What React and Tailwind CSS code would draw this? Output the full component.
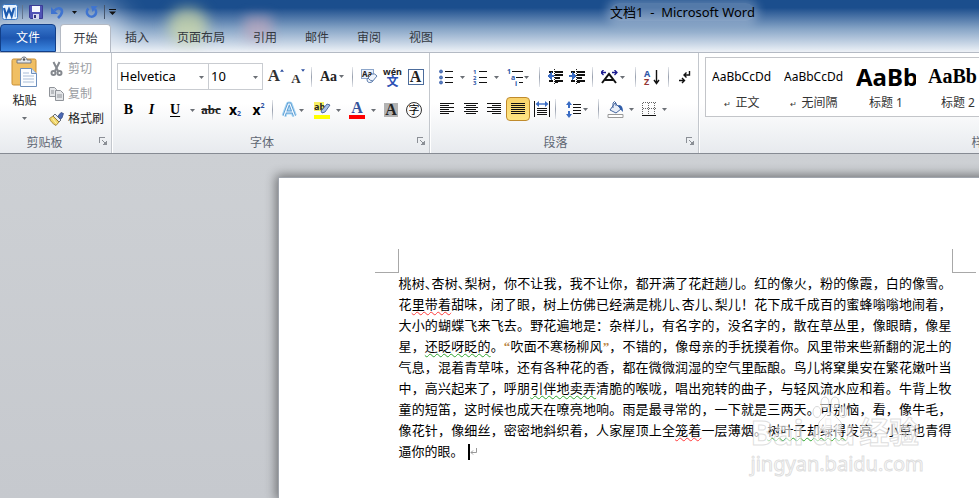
import React from "react";
import clsx from "clsx";

const Arrow = ({ className }) => (
  <svg width="5" height="3" viewBox="0 0 5 3" className={clsx("shrink-0", className)}>
    <path d="M0 0h5L2.5 3z" fill="#6b6f75" />
  </svg>
);

const Sep = ({ className }) => (
  <span className={clsx("h-5 w-px shrink-0 bg-gradient-to-b from-gray-200 via-gray-400 to-gray-200", className)} />
);

const Tool = ({ label, className, split, children }) => (
  <button
    type="button"
    aria-label={label}
    className={clsx("flex h-6 shrink-0 items-center", split ? "justify-between pr-1 pl-1" : "justify-center", className)}
  >
    {children}
    {split && <Arrow />}
  </button>
);

// letters used as toolbar glyphs
const Letter = ({ className, children }) => (
  <span className={clsx("font-['Liberation_Serif',serif] font-bold", className)}>{children}</span>
);

const Lines = ({ rows }) => (
  <svg width="16" height="14" viewBox="0 0 16 14" stroke="#111" strokeWidth="1" shapeRendering="crispEdges">
    {rows.map(([a, b], i) => (
      <path key={i} d={`M${a} ${i * 2 + 1.5}H${b}`} />
    ))}
  </svg>
);

const Group = ({ title, className, children }) => (
  <section className={clsx("flex flex-col border-r border-[#c3c7cd] shadow-[1px_0_0_#fff]", className)}>
    <div className="h-20">{children}</div>
    <div className="relative flex h-5 items-center justify-center pr-[22px] text-[#5f6773]">
      {title}
      <button type="button" aria-label={`${title} 设置`} className="absolute right-1 top-1">
        <svg width="8" height="8" viewBox="0 0 8 8" fill="none" stroke="#8b8f96" shapeRendering="crispEdges">
          <path d="M.5 6V.5H6" />
          <path d="M3 3l3 3M7.5 4v3.5H4" />
          <path d="M5 5h2v2H5z" fill="#8b8f96" stroke="none" />
        </svg>
      </button>
    </div>
  </section>
);

const QuickAccess = () => (
  <div className="flex h-6 items-center pl-0.5">
    <svg width="16" height="16" viewBox="0 0 16 16">
      <rect x=".5" y=".5" width="15" height="15" rx="2" fill="#eaf3fd" stroke="#3b78c4" />
      <path d="M12.500 3h1.500v10h-1.500z" fill="#8db8ea" />
      <path d="M2 4l2.300 8L7 5.200 9.700 12 12 4" fill="none" stroke="#1c5bb0" strokeWidth="2.200" />
    </svg>
    <span className="ml-1 h-3.5 w-px bg-slate-500" />
    <button type="button" aria-label="保存" className="ml-1.5">
      <svg width="14" height="14" viewBox="0 0 14 14">
        <path d="M.5.5h13v13h-12l-1-1z" fill="#5053b5" stroke="#3a3c94" />
        <path d="M3 1h8v6H3z" fill="#f4f7fd" />
        <path d="M4 9h6v5H4z" fill="#d5d9ee" />
        <path d="M5 10h2v3H5z" fill="#34367f" />
      </svg>
    </button>
    <button type="button" aria-label="撤消" className="ml-2 flex items-center gap-2">
      <svg width="13" height="13" viewBox="0 0 13 13" fill="none">
        <path d="M3.500 4.500c3-3.500 7.500-2.500 7.500 1 0 3-2 4.500-4 6.500" stroke="#3f74d0" strokeWidth="2.600" />
        <path d="M0 1v7h7z" fill="#3f74d0" />
      </svg>
      <svg width="5" height="3" viewBox="0 0 5 3"><path d="M0 0h5L2.5 3z" fill="#111" /></svg>
    </button>
    <button type="button" aria-label="重复" className="ml-2">
      <svg width="13" height="13" viewBox="0 0 13 13" fill="none">
        <path d="M3.500 2.500a4.600 4.600 0 1 0 6.500.5" stroke="#3f74d0" strokeWidth="2.600" />
        <path d="M6 0h6.500L7.500 6z" fill="#3f74d0" />
      </svg>
    </button>
    <span className="ml-1.5 h-3.5 w-px bg-slate-600" />
    <button type="button" aria-label="自定义快速访问工具栏" className="ml-1">
      <svg width="7" height="6" viewBox="0 0 7 6" fill="#111"><path d="M0 0h7v1H0zM0 2.500h7L3.500 6z" /></svg>
    </button>
  </div>
);

const tabs = ["插入", "页面布局", "引用", "邮件", "审阅", "视图"];

const TitleBar = () => (
  <header className="relative overflow-hidden bg-gradient-to-b from-[#1b4e8d] from-15% via-[#86a4c6] via-55% to-[#eef2f7]">
    <div className="absolute -left-4 top-1 h-14 w-36 rounded-full bg-white/50 blur-md" />
    <div className="absolute left-[168px] top-2 h-9 w-10 rounded-full bg-[#d5e0a8]/70 blur-[7px]" />
    <div className="absolute left-[244px] top-4 h-6 w-7 rounded bg-[#c8a9bd]/60 blur-[6px]" />
    <div className="relative">
      <h1 className="absolute inset-x-0 top-0 text-center text-[13px] leading-6 text-black">
        <span className="rounded-full bg-white/25 shadow-[0_0_8px_4px_rgba(255,255,255,0.25)]">文档1&nbsp; -&nbsp; Microsoft Word</span>
      </h1>
      <div className="relative"><QuickAccess /></div>
      <nav className="flex h-7 items-stretch text-[#33383f]">
        <button type="button" className="mr-1 w-14 rounded-t-sm border border-[#123f88] bg-gradient-to-b from-[#3a78cc] via-[#1d56b0] to-[#3b86e0] text-white">
          文件
        </button>
        <button type="button" className="w-[51px] rounded-t border border-b-0 border-[#b4bac4] bg-white">开始</button>
        {tabs.map((tab) => (
          <button key={tab} type="button" className="px-3.5">{tab}</button>
        ))}
      </nav>
    </div>
  </header>
);

const Clipboard = () => (
  <Group title="剪贴板" className="w-28">
    <div className="flex pt-[3px]">
      <button type="button" className="flex w-[49px] flex-col items-center">
        <svg width="27" height="31" viewBox="0 0 27 31">
          <rect x="1" y="3" width="24" height="26" rx="1.500" fill="#f0bf64" stroke="#c98f35" />
          <path d="M6 7V4h4c0-4 6-4 6 0h4v3z" fill="#e3e6ea" stroke="#72777e" />
          <circle cx="13" cy="3.500" r="1.200" fill="#555" />
          <path d="M9.500 12.500h11l5 5v13h-16z" fill="#fbfdff" stroke="#6d8fbd" />
          <path d="M20.500 12.500v5h5" fill="#dce8f6" stroke="#6d8fbd" />
          <path d="M12 17h6M12 20h11M12 23h11M12 26h11" stroke="#a9bdd8" />
        </svg>
        <span className="mt-1 leading-5">粘贴</span>
        <Arrow className="mt-1.5" />
      </button>
      <div className="flex flex-col">
        <button type="button" className="flex h-[25px] items-center gap-1 text-[#9a9da2]">
          <svg width="15" height="16" viewBox="0 0 15 16" fill="none" stroke="#85898f" strokeWidth="2">
            <path d="M4.500 1l4.500 9M10.500 1L6 10" />
            <circle cx="4.500" cy="12" r="2" />
            <circle cx="10.500" cy="12" r="2" />
          </svg>
          剪切
        </button>
        <button type="button" className="flex h-[25px] items-center gap-1 text-[#9a9da2]">
          <svg width="15" height="14" viewBox="0 0 15 14" fill="#e4e6e9" stroke="#8f9399">
            <path d="M.5.5h5l2 2v7h-7z" />
            <path d="M6.500 3.500h5l3 3v7h-8z" />
            <path d="M2 4h3M2 6h3M8 8h5M8 10h5" />
          </svg>
          复制
        </button>
        <button type="button" className="flex h-[25px] items-center gap-1">
          <svg width="15" height="14" viewBox="0 0 15 14">
            <path d="M9 4l3-3.500 2.500 1L13 6l-3 2z" fill="#4a68b4" stroke="#2d417c" strokeWidth=".7" />
            <path d="M6 2l6 6-2 2-6-6z" fill="#e9edf3" stroke="#444c5c" strokeWidth=".8" />
            <path d="M4 4l6 6-3 3.500C4 12 1.500 9.500.5 6.500z" fill="#f0d568" stroke="#92742c" strokeWidth=".8" />
            <path d="M3.500 6.500l4 5" stroke="#fff6c0" />
          </svg>
          格式刷
        </button>
      </div>
    </div>
  </Group>
);

const Combo = ({ label, value, className }) => (
  <label className={clsx("relative block h-[27px] border border-[#c9ccd1] bg-white", className)}>
    <select aria-label={label} defaultValue={value} className="h-full w-full appearance-none px-0.5 text-[13px] text-black">
      <option>{value}</option>
    </select>
    <Arrow className="absolute right-1 top-3" />
  </label>
);

const FontGroup = () => (
  <Group title="字体" className="w-[318px] pl-[5px]">
    <div className="flex items-center pt-2.5">
      <Combo label="字体" value="Helvetica" className="w-[92px]" />
      <Combo label="字号" value="10" className="-ml-px w-[55px]" />
      <Tool label="增大字体" className="ml-0.5 w-[22px]">
        <Letter className="text-[17px] text-[#333]">A</Letter>
        <svg width="4" height="3" className="mb-3" viewBox="0 0 5 3"><path d="M0 3h5L2.500 0z" fill="#2d4fa0" /></svg>
      </Tool>
      <Tool label="缩小字体" className="w-[22px]">
        <Letter className="mt-1 text-[13px] text-[#333]">A</Letter>
        <svg width="4" height="3" className="mb-3" viewBox="0 0 5 3"><path d="M0 0h5L2.500 3z" fill="#2d4fa0" /></svg>
      </Tool>
      <Sep className="ml-0.5" />
      <Tool label="更改大小写" split className="ml-1 w-8">
        <Letter className="text-sm text-[#222]">Aa</Letter>
      </Tool>
      <Sep className="ml-1" />
      <Tool label="清除格式" className="ml-1 w-6">
        <svg width="17" height="16" viewBox="0 0 17 16">
          <rect x=".5" y=".5" width="12" height="9" fill="#e9f1fc" stroke="#8da6ca" />
          <text x="1" y="8" fontSize="8" fontWeight="700" fill="#222">Aa</text>
          <path d="M6 10l5-5q3-1 5 2l-5 6q-5 2-5-3z" fill="#eef3fb" stroke="#5f7fae" />
          <path d="M7 9q2 3 5 3" fill="none" stroke="#5f7fae" />
        </svg>
      </Tool>
      <Tool label="拼音指南" className="w-[23px] flex-col">
        <span className="text-[9px] leading-[9px] font-bold text-[#222]">wén</span>
        <span className="text-xs leading-[11px] font-bold text-[#2b50b4]">文</span>
      </Tool>
      <Tool label="字符边框" className="w-[23px]">
        <Letter className="h-4 w-4 border border-[#4c6c9c] bg-white text-center text-base leading-3.5 text-[#222]">A</Letter>
      </Tool>
    </div>
    <div className="flex items-center pt-2">
      <Tool label="加粗" className="w-[23px]"><Letter className="text-sm text-black">B</Letter></Tool>
      <Tool label="倾斜" className="w-[23px]"><Letter className="text-sm text-black italic">I</Letter></Tool>
      <Tool label="下划线" split className="w-9 pl-[7px]">
        <Letter className="text-sm text-black underline underline-offset-2">U</Letter>
      </Tool>
      <Tool label="删除线" className="w-6"><Letter className="text-[13px] text-[#222] line-through">abc</Letter></Tool>
      <Tool label="下标" className="w-6 text-black">
        <span className="text-sm leading-4 font-bold">x</span><span className="mt-2 text-[7px] leading-2 font-bold text-[#2d4fa0]">2</span>
      </Tool>
      <Tool label="上标" className="w-[23px] text-black">
        <span className="text-sm leading-4 font-bold">x</span><span className="mb-2 text-[7px] leading-2 font-bold text-[#2d4fa0]">2</span>
      </Tool>
      <Sep className="ml-0.5" />
      <Tool label="文本效果" split className="ml-1 w-[31px]">
        <svg width="17" height="18" viewBox="0 0 17 18" className="shrink-0">
          <path d="M3 15L7.500 3h1.500L13.500 15M5 11h7" fill="none" stroke="#a9d8f5" strokeWidth="5" strokeLinejoin="round" />
          <path d="M3 15L7.500 3h1.500L13.500 15M5 11h7" fill="none" stroke="#5b9ad2" strokeWidth="3" />
          <path d="M3 15L7.500 3h1.500L13.500 15M5 11h7" fill="none" stroke="#f5fbff" strokeWidth="1.200" />
        </svg>
      </Tool>
      <Tool label="突出显示" split className="ml-0.5 w-[35px]">
        <svg width="17" height="18" viewBox="0 0 17 18">
          <path d="M0 1h10v9H0z" fill="#f7ef62" />
          <text x="0" y="9" fontSize="9" fontWeight="700" fill="#222">ab</text>
          <path d="M7 10l6-7 3 1-5 7-3 1z" fill="#a9c2e8" stroke="#334f8b" strokeWidth=".8" />
          <path d="M0 14h16v4H0z" fill="#ffff00" />
        </svg>
      </Tool>
      <Tool label="字体颜色" split className="w-[35px]">
        <Letter className="flex w-4 flex-col items-center border-b-4 border-[#fe0000] text-base leading-3.5 text-[#34539b]">A</Letter>
      </Tool>
      <Tool label="字符底纹" className="w-[22px]">
        <Letter className="h-3.5 w-3.5 bg-[#b3b3b3] text-center text-base leading-3.5 text-[#222]">A</Letter>
      </Tool>
      <Tool label="带圈字符" className="w-6">
        <span className="h-4 w-4 rounded-full border border-[#333] text-center text-[11px] leading-3.5 text-black">字</span>
      </Tool>
    </div>
  </Group>
);

const ListIcon = ({ marks }) => (
  <svg width="15" height="16" viewBox="0 0 15 16" className="overflow-visible">
    {[2.5, 8.5, 13.5].map((y, i) => (
      <g key={y}>
        {marks ? (
          <text x="0" y={y + 2.5} fontSize="6" fontWeight="700" fill="#2d57a8">{marks[i]}</text>
        ) : (
          <circle cx="2" cy={y} r="1.500" fill="#5d7fbd" stroke="#2d57a8" strokeWidth=".8" />
        )}
        <path d={`M6 ${y}h8`} stroke="#111" />
      </g>
    ))}
  </svg>
);

const IndentIcon = ({ right }) => (
  <svg width="17" height="16" viewBox="0 0 17 16" shapeRendering="crispEdges">
    <path d="M2 2.500h4M8 2.500h8M8 5.500h8M8 8.500h5M2 11.500h4M8 11.500h8" stroke="#111" strokeWidth="2" />
    <path d="M8 13.500h3" stroke="#111" />
    <path d="M7.500 0v16" stroke="#222" strokeDasharray="1 1" />
    <path d={right ? "M0 6h3V3l5 4-5 4V8H0z" : "M7 6H5V3L0 7l5 4V8h2z"} fill="#3a6cc4" />
  </svg>
);

const ParagraphGroup = () => (
  <Group title="段落" className="w-[269px] pl-[5px]">
    <div className="flex items-center pt-3">
      <Tool label="项目符号" split className="w-[34px]"><ListIcon /></Tool>
      <Tool label="编号" split className="w-[34px]"><ListIcon marks={["1", "2", "3"]} /></Tool>
      <Tool label="多级列表" split className="w-[30px]">
        <svg width="17" height="17" viewBox="0 0 17 17" fontSize="7" fontWeight="700" fill="#2d57a8" className="shrink-0 overflow-visible">
          <text x="0" y="5">1</text>
          <text x="4" y="11">a</text>
          <text x="8" y="17">i</text>
          <path d="M5 2.500h11M9 8.500h7M12 13.500h4" stroke="#111" />
        </svg>
      </Tool>
      <Sep className="ml-1.5" />
      <Tool label="减少缩进量" className="ml-1 w-[22px]"><IndentIcon /></Tool>
      <Tool label="增加缩进量" className="w-[22px]"><IndentIcon right /></Tool>
      <Sep className="ml-1" />
      <Tool label="中文版式" split className="ml-1 w-8">
        <svg width="17" height="14" viewBox="0 0 17 14" fill="none" className="shrink-0">
          <path d="M1 13L8 4l7 9M4 10h8" stroke="#111" strokeWidth="2" />
          <path d="M0 2.500h5M2.500 0L0 2.500 2.500 5M16 2.500h-5M13.500 0L16 2.500 13.500 5" stroke="#1b1b8f" strokeWidth="1.300" />
        </svg>
      </Tool>
      <Sep className="ml-1.5" />
      <Tool label="排序" className="ml-1 w-6">
        <svg width="16" height="17" viewBox="0 0 16 17" fontSize="9" fontWeight="700" className="overflow-visible">
          <text x="0" y="8" fill="#2d57a8">A</text>
          <text x="0" y="16" fill="#943634">Z</text>
          <path d="M12.500 1v12M10 11l2.500 3.500L15 11" stroke="#111" fill="none" strokeWidth="1.400" />
        </svg>
      </Tool>
      <Sep className="ml-1" />
      <Tool label="显示编辑标记" className="ml-1 w-6">
        <svg width="12" height="14" viewBox="0 0 12 14" fill="none" stroke="#111" strokeWidth="1.400">
          <path d="M10.500 1v4H5M7.500 2.500L5 5l2.500 2.500M0 10.500h5M3 8l2.500 2.500L3 13" />
        </svg>
      </Tool>
    </div>
    <div className="flex items-center pt-2">
      <Tool label="左对齐" className="w-6"><Lines rows={[[1, 15], [1, 10], [1, 15], [1, 10], [1, 15], [1, 10]]} /></Tool>
      <Tool label="居中" className="w-[23px]"><Lines rows={[[1, 15], [3, 13], [1, 15], [3, 13], [1, 15], [3, 13]]} /></Tool>
      <Tool label="右对齐" className="w-6"><Lines rows={[[1, 15], [6, 15], [1, 15], [6, 15], [1, 15], [6, 15]]} /></Tool>
      <Tool label="两端对齐" className="w-6 rounded-sm border border-[#c08b2d] bg-gradient-to-b from-[#f8d26a] to-[#ffe683]">
        <Lines rows={[[1, 15], [1, 15], [1, 15], [1, 15], [1, 15], [1, 15]]} />
      </Tool>
      <Tool label="分散对齐" className="w-[23px]">
        <svg width="16" height="16" viewBox="0 0 16 16">
          <path d="M.5 0v16M15.500 0v16M3 7.500h10M3 9.500h10M3 11.500h10M3 13.500h10" stroke="#111" shapeRendering="crispEdges" />
          <path d="M3 3h10" stroke="#3a6cc4" strokeWidth="1.400" />
          <path d="M1.500 3l3.500-3v6zM14.500 3L11 0v6z" fill="#3a6cc4" />
        </svg>
      </Tool>
      <Sep className="ml-0.5" />
      <Tool label="行距" split className="ml-1.5 w-[30px]">
        <svg width="16" height="17" viewBox="0 0 16 17" className="shrink-0">
          <path d="M7 3.500h8M7 6.500h8M7 9.500h8M7 12.500h8" stroke="#111" shapeRendering="crispEdges" />
          <path d="M3 0l3 4H4v3H2V4H0zM3 17l3-4H4v-3H2v3H0z" fill="#3a6cc4" />
        </svg>
      </Tool>
      <Sep className="ml-1.5" />
      <Tool label="底纹" split className="ml-1 w-[35px]">
        <svg width="17" height="17" viewBox="0 0 17 17">
          <path d="M8 2l6 6-5 4-6-3z" fill="#e8eef8" stroke="#46679f" />
          <path d="M6 7V2q1.500-3 3 0v3" fill="none" stroke="#46679f" />
          <path d="M11 4q5-1 5 7l-3-3z" fill="#2f5ca8" />
          <path d="M1 13.500h15v3H1z" fill="#fff" stroke="#999" />
        </svg>
      </Tool>
      <Tool label="边框" split className="w-[33px]">
        <svg width="14" height="14" viewBox="0 0 14 14" shapeRendering="crispEdges" stroke="#666">
          <path d="M.5.5h13M.5 6.500h13M.5.5v13M6.500.5v13M12.500.5v13" strokeDasharray="1 1" />
          <path d="M0 13.500h14" stroke="#111" />
        </svg>
      </Tool>
    </div>
  </Group>
);

const styles = [
  { name: "正文", mark: true, sample: "AaBbCcDd", look: "text-xs" },
  { name: "无间隔", mark: true, sample: "AaBbCcDd", look: "text-xs" },
  { name: "标题 1", sample: "AaBb", look: "text-2xl font-bold" },
  { name: "标题 2", sample: "AaBb", look: "text-xl font-bold font-['Liberation_Serif',serif]" },
];

const StylesGroup = () => (
  <Group title="样式" className="mr-20 min-w-0 flex-1 pl-1.5">
    <div className="pt-1">
      <div className="flex h-[60px] border border-[#c3c5c9] bg-white">
        {styles.map((s) => (
          <button key={s.name} type="button" className="flex w-[72px] flex-col items-center px-1.5">
            <span className={clsx("h-[37px] w-full overflow-hidden text-left leading-[37px] whitespace-nowrap text-black", s.look)}>{s.sample}</span>
            <span className="leading-4 text-[#333]">
              {s.mark && <span className="mr-1 text-[8px]">↵</span>}
              {s.name}
            </span>
          </button>
        ))}
      </div>
    </div>
  </Group>
);

const Red = ({ children }) => (
  <span className="underline decoration-[#ff3b3b] decoration-wavy decoration-1 underline-offset-2 [text-decoration-skip-ink:none]">{children}</span>
);

const Green = ({ children }) => (
  <span className="underline decoration-[#2fa52f] decoration-wavy decoration-1 underline-offset-2 [text-decoration-skip-ink:none]">{children}</span>
);

// half width pause mark, as in tightly set lines
const Dun = () => <span className="[font-feature-settings:'halt']">、</span>;

const Quote = ({ children }) => (
  <span className="font-['Liberation_Serif',serif] font-bold text-[#b98545]">{children}</span>
);

const lines = [
  <>桃树<Dun />杏树<Dun />梨树，你不让我，我不让你，都开满了花赶趟儿。红的像火，粉的像霞，白的像雪。</>,
  <>花<Red>里带着</Red>甜味，闭了眼，树上仿佛已经满是桃儿<Dun />杏儿<Dun />梨儿！花下成千成百的蜜蜂嗡嗡地闹着，</>,
  <>大小的蝴蝶飞来飞去。野花遍地是：杂样儿，有名字的，没名字的，散在草丛里，像眼睛，像星</>,
  <>星，<Green>还眨呀眨的</Green>。<Quote>“</Quote>吹面不寒杨柳风<Quote>”</Quote>，不错的，像母亲的手抚摸着你。风里带来些新翻的泥土的</>,
  <>气息，混着青草味，还有各种花的香，都在微微润湿的空气里酝酿。鸟儿将窠巢安在繁花嫩叶当</>,
  <>中，高兴起来了，呼朋<Green>引伴地卖弄</Green>清脆的喉咙，唱出宛转的曲子，与轻风流水应和着。牛背上牧</>,
  <>童的短笛，这时候也成天在嘹亮地响。雨是最寻常的，一下就是三两天。可别恼，看，像牛毛，</>,
  <>像花针，像细丝，密密地斜织着，人家屋顶上全<Red>笼着</Red>一层薄烟。<Green>树叶子却绿得</Green>发亮，小草也青得</>,
];

const Watermark = () => (
  <div className="pointer-events-none absolute top-[123px] left-[352px] whitespace-nowrap text-white/60 select-none [-webkit-text-stroke:1px_rgba(200,200,200,0.6)]">
    <div className="flex h-14 items-end">
      <span className="text-[34px] leading-10 font-bold">Bai</span>
      <span className="relative ml-2 text-[34px] leading-10 font-bold">
        du
        <svg width="36" height="36" viewBox="0 0 36 36" className="absolute -top-4 left-0" fill="#ffffff" fillOpacity=".6" stroke="#c8c8c8" strokeOpacity=".7">
          <ellipse cx="5" cy="16" rx="4" ry="5.500" />
          <ellipse cx="13" cy="7" rx="4" ry="6" />
          <ellipse cx="23" cy="7" rx="4" ry="6" />
          <ellipse cx="31" cy="16" rx="4" ry="5.500" />
          <path d="M18 16c4 0 5 5 9 8 5 4 2 11-4 10-3-1-7-1-10 0-6 1-9-6-4-10 4-3 5-8 9-8z" />
        </svg>
      </span>
      <span className="ml-1 text-[30px] leading-10 font-bold">经验</span>
    </div>
    <div className="text-xl leading-6">jingyan.baidu.com</div>
  </div>
);

const Document = () => (
  <main className="flex flex-1 justify-center bg-gradient-to-b from-[#cdd0d4] to-[#c6c9ce] pt-[23px] pr-4">
    <article className="w-[794px] border-t border-l border-[#a0a5ad] bg-white shadow-[0_0_10px_2px_rgba(0,0,0,0.45)]">
      <div className="mx-24 flex justify-between pt-[71px]">
        <span className="h-6 w-6 border-r border-b border-[#a8a8a8]" />
        <span className="h-6 w-6 border-b border-l border-[#a8a8a8]" />
      </div>
      <div className="relative mx-[120px] text-[13px] leading-[21px] text-black">
        {lines.map((line, i) => (
          <p key={i} className="[text-align-last:justify]">{line}</p>
        ))}
        <p className="flex items-center">
          逼你的眼。
          <span className="ml-1 h-4 w-0.5 bg-black" />
          <svg width="7" height="7" viewBox="0 0 7 7" fill="none" stroke="#999"><path d="M6.500 0v4.500H1M3 2.500l-2 2 2 2" /></svg>
        </p>
        <Watermark />
      </div>
    </article>
  </main>
);

export default function App() {
  return (
    <div className="h-screen overflow-hidden font-['Noto_Sans','Noto_Sans_CJK_SC',sans-serif] text-xs text-[#222]">
      <div className="flex min-h-full min-w-[1365px] flex-col">
        <TitleBar />
        <div className="flex h-[102px] border-t border-b border-t-[#b4bac4] border-b-[#868b93] bg-gradient-to-b from-white via-white to-[#e7eaee]">
          <Clipboard />
          <FontGroup />
          <ParagraphGroup />
          <StylesGroup />
        </div>
        <Document />
      </div>
    </div>
  );
}
